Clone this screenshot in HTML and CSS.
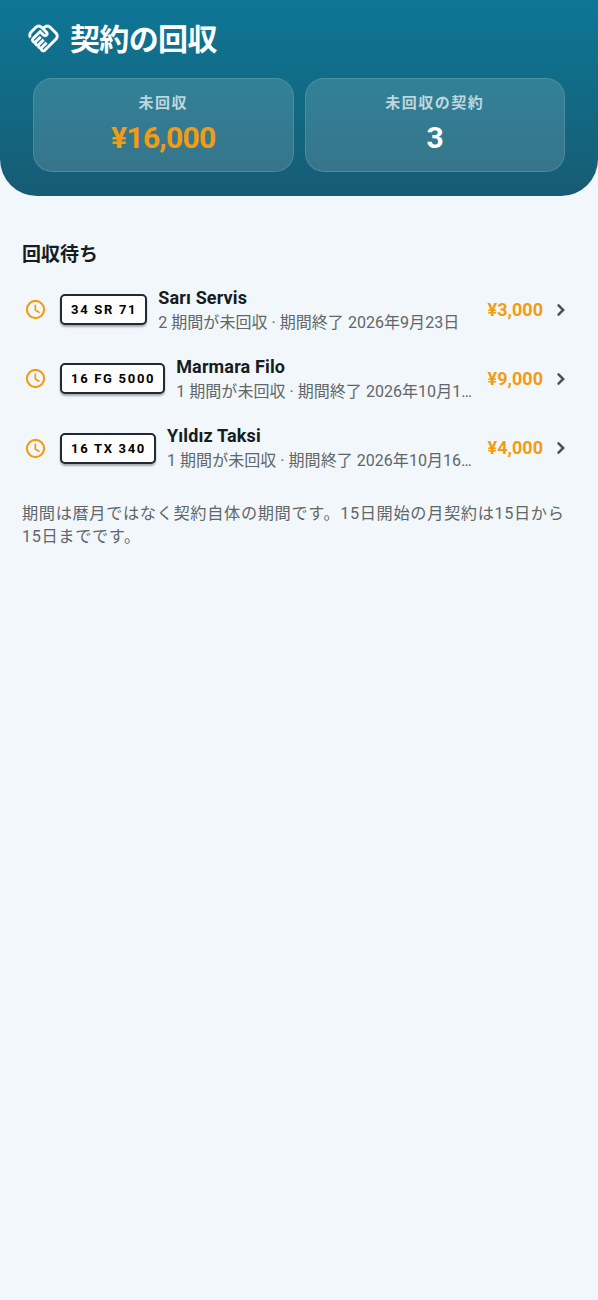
FILE: index.html
```html
<!DOCTYPE html>
<html lang="ja">
<head>
<meta charset="utf-8">
<title>契約の回収</title>
<link rel="stylesheet" href="styles.css">
</head>
<body>
<svg class="defs" width="0" height="0" aria-hidden="true">
  <symbol id="clock" viewBox="0 0 24 24"><circle cx="12" cy="12" r="9" fill="none" stroke="currentColor" stroke-width="2.2"/><path d="M11.8 7.6v4.9l3.8 2.3" fill="none" stroke="currentColor" stroke-width="1.8" stroke-linecap="round" stroke-linejoin="round"/></symbol>
  <symbol id="chevron" viewBox="0 0 24 24"><path d="M9.3 6.9l5.1 5.1-5.1 5.1" fill="none" stroke="currentColor" stroke-width="2.7" stroke-linecap="round"/></symbol>
</svg>
<header class="header">
  <div class="heading">
    <svg class="logo" viewBox="0 0 24 24"><path fill="currentColor" stroke="currentColor" stroke-width=".15" d="M12.22 19.85c-.18.18-.5.21-.71 0-.18-.18-.21-.5 0-.71l3.39-3.39-1.41-1.41-3.39 3.39c-.19.2-.51.19-.71 0-.21-.21-.18-.53 0-.71l3.39-3.39-1.41-1.41-3.39 3.39c-.18.18-.5.21-.71 0-.19-.19-.19-.51 0-.71l3.39-3.39-1.42-1.41-3.39 3.39c-.18.18-.5.21-.71 0-.19-.2-.19-.51 0-.71L9.52 8.4l1.87 1.86c.95.95 2.59.94 3.54 0 .98-.98.98-2.56 0-3.54l-1.86-1.86.28-.28c.78-.78 2.05-.78 2.83 0l4.24 4.24c.78.78.78 2.05 0 2.83l-8.2 8.2zm9.61-6.78c1.56-1.56 1.56-4.09 0-5.66l-4.24-4.24c-1.56-1.56-4.09-1.56-5.66 0l-.28.28-.28-.28c-1.56-1.56-4.09-1.56-5.66 0L2.17 6.71c-1.42 1.42-1.55 3.63-.4 5.19l1.45-1.45c-.39-.75-.26-1.7.37-2.33l3.54-3.54c.78-.78 2.05-.78 2.83 0l3.56 3.56c.18.18.21.5 0 .71-.21.21-.53.18-.71 0L9.52 5.57l-5.8 5.79c-.98.97-.98 2.56 0 3.54.39.39.89.63 1.42.7.07.52.3 1.02.7 1.42.4.4.9.63 1.42.7.07.52.3 1.02.7 1.42.4.4.9.63 1.42.7.07.54.31 1.03.7 1.42.47.47 1.1.73 1.77.73.67 0 1.3-.26 1.77-.73l8.21-8.19z"/></svg>
    <h1 class="title">契約の回収</h1>
  </div>
  <div class="stats">
    <div class="stat"><span class="stat-label">未回収</span><span class="stat-value due">¥16,000</span></div>
    <div class="stat"><span class="stat-label">未回収の契約</span><span class="stat-value">3</span></div>
  </div>
</header>
<main class="content">
  <h2 class="section">回収待ち</h2>
  <div class="row">
    <svg class="clock"><use href="#clock"/></svg>
    <span class="plate">34 SR 71</span>
    <div class="info"><div class="name">Sarı Servis</div><div class="detail">2 期間が未回収 · 期間終了 2026年9月23日</div></div>
    <span class="amount">¥3,000</span>
    <svg class="chevron"><use href="#chevron"/></svg>
  </div>
  <div class="row">
    <svg class="clock"><use href="#clock"/></svg>
    <span class="plate">16 FG 5000</span>
    <div class="info"><div class="name">Marmara Filo</div><div class="detail">1 期間が未回収 · 期間終了 2026年10月16日</div></div>
    <span class="amount">¥9,000</span>
    <svg class="chevron"><use href="#chevron"/></svg>
  </div>
  <div class="row">
    <svg class="clock"><use href="#clock"/></svg>
    <span class="plate">16 TX 340</span>
    <div class="info"><div class="name">Yıldız Taksi</div><div class="detail">1 期間が未回収 · 期間終了 2026年10月16日</div></div>
    <span class="amount">¥4,000</span>
    <svg class="chevron"><use href="#chevron"/></svg>
  </div>
  <p class="note">期間は暦月ではなく契約自体の期間です。15日開始の月契約は15日から15日までです。</p>
</main>
</body>
</html>
```
FILE: styles.css
```css
* { box-sizing: border-box; }
body {
  margin: 0;
  min-height: 1300px;
  background: #f1f7fa;
  color: #171c1f;
  font-family: Roboto, "Noto Sans CJK JP", sans-serif;
}
.defs { display: block; position: absolute; }
.header {
  height: 196px;
  padding: 16px 33px 0;
  background: linear-gradient(#0e7696, #116a84 50%, #175b74);
  border-radius: 0 0 37px 37px;
  color: #fff;
}
.heading { display: flex; align-items: center; gap: 10px; height: 44px; margin-left: -6px; }
.logo { width: 33px; height: 33px; flex: none; }
.title { margin: 0; padding-top: 3px; font-size: 30px; line-height: 44px; font-weight: 700; letter-spacing: -0.65px; }
.stats { display: flex; gap: 11px; margin-top: 18px; }
.stat {
  flex: 1;
  height: 93.5px;
  padding-top: 13px;
  display: flex;
  flex-direction: column;
  align-items: center;
  background: rgba(255, 255, 255, .14);
  border: 1px solid rgba(255, 255, 255, .13);
  border-radius: 19px;
}
.stat-label { font-size: 15px; line-height: 22px; font-weight: 700; letter-spacing: 1.5px; color: rgba(255, 255, 255, .7); }
.stat-value { margin-top: 4px; font-size: 30px; line-height: 40px; font-weight: 700; letter-spacing: -0.75px; }
.due { color: #f39c12; }
.content { padding: 44px 22px 0; }
.section { margin: 0 0 5px; font-size: 19px; line-height: 30px; font-weight: 700; }
.row { display: flex; align-items: center; height: 69.3px; padding: 0 8px 0 2px; }
.clock { width: 23px; height: 23px; flex: none; color: #f39c12; margin-right: 13px; }
.plate {
  flex: none;
  height: 31px;
  padding: 0 8px 0 9px;
  border: 2px solid #1f2937;
  border-radius: 5px;
  background: #fff;
  box-shadow: 0 2px 2px rgba(0, 0, 0, .3);
  color: #000;
  font-size: 13px;
  line-height: 27px;
  font-weight: 700;
  letter-spacing: 1.7px;
}
.info { flex: 1; min-width: 0; margin: 0 12px 0 11px; }
.name { font-size: 18px; line-height: 25px; font-weight: 700; letter-spacing: .14px; }
.detail {
  font-size: 16px;
  line-height: 25px;
  letter-spacing: .04px;
  color: #626669;
  white-space: nowrap;
  overflow: hidden;
  text-overflow: ellipsis;
}
.amount { font-size: 18px; line-height: 24px; font-weight: 700; color: #f39c12; }
.chevron { width: 22px; height: 22px; flex: none; color: #4b5054; margin: 0 -4px 0 7px; }
.note { margin: 19px 0 0; font-size: 16.2px; line-height: 23px; letter-spacing: .65px; color: #626669; }
```
